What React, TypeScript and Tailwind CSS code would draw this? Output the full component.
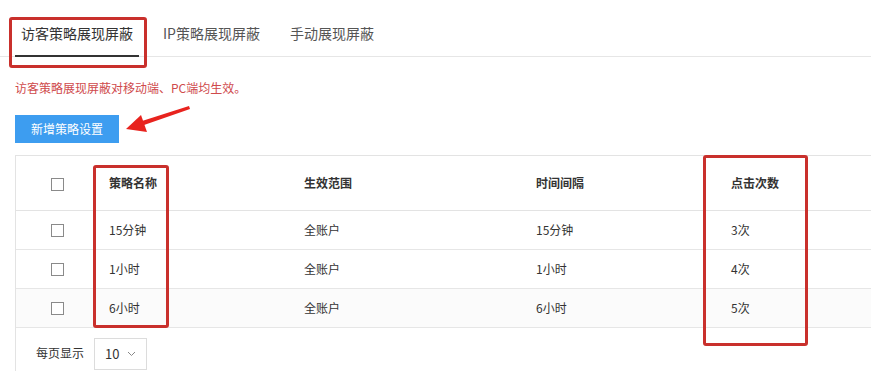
import React from "react";

const rows = [
  { name: "15分钟", scope: "全账户", interval: "15分钟", clicks: "3次" },
  { name: "1小时", scope: "全账户", interval: "1小时", clicks: "4次" },
  { name: "6小时", scope: "全账户", interval: "6小时", clicks: "5次" },
];

function Checkbox() {
  return <span className="ml-[35px] block h-[13px] w-[13px] border border-[#8a8a8a] bg-white" />;
}

export default function App() {
  return (
    <div
      className="relative h-[371px] w-[871px] overflow-hidden bg-white text-[#333]"
      style={{ fontFamily: '"Noto Sans CJK SC", "Noto Sans", sans-serif' }}
    >
      {/* Tabs */}
      <div className="flex h-[57px] gap-[18px] border-b border-[#e6e6e6] pl-[15px]">
        <div className="relative flex h-full items-center px-[6px] pt-[10px] text-[14px] leading-[20px] text-[#333]">
          访客策略展现屏蔽
          <span className="absolute bottom-[-1px] left-0 right-0 h-[2px] bg-[#333]" />
        </div>
        <div className="flex h-full items-center px-[6px] pt-[10px] text-[14px] leading-[20px] text-[#555]">
          IP策略展现屏蔽
        </div>
        <div className="flex h-full items-center px-[6px] pt-[10px] text-[14px] leading-[20px] text-[#555]">
          手动展现屏蔽
        </div>
      </div>

      <div className="pl-[15px]">
        <p className="mt-[22px] text-[12px] leading-[18px] text-[#cf4a4c]">访客策略展现屏蔽对移动端、PC端均生效。</p>
        <button className="mt-[18px] flex h-[28px] w-[104px] items-center justify-center bg-[#3d9df0] text-[12px] text-white">
          新增策略设置
        </button>

        {/* Table */}
        <div className="mt-[12px] border-l border-t border-[#e3e3e3]">
          <div className="grid h-[55px] grid-cols-[93px_195px_232px_195px_1fr] items-center border-b border-[#e3e3e3] text-[12px] font-bold text-[#333]">
            <div className="pt-[2px]"><Checkbox /></div>
            <div>策略名称</div>
            <div>生效范围</div>
            <div>时间间隔</div>
            <div>点击次数</div>
          </div>
          {rows.map((r, i) => (
            <div
              key={i}
              className={`grid h-[39px] grid-cols-[93px_195px_232px_195px_1fr] items-center border-b border-[#e6e6e6] text-[12px] text-[#333] ${i === 2 ? "bg-[#fbfbfb]" : "bg-white"}`}
            >
              <div><Checkbox /></div>
              <div>{r.name}</div>
              <div>{r.scope}</div>
              <div>{r.interval}</div>
              <div>{r.clicks}</div>
            </div>
          ))}
          <div className="flex h-[44px] items-start gap-[10px] pl-[20px] pt-[10px]">
            <span className="mt-[7px] text-[12px] leading-[16px] text-[#333]">每页显示</span>
            <div className="flex h-[32px] w-[53px] items-center gap-[8px] border border-[#dcdcdc] pl-[10px] text-[13px] text-[#333]">
              10
              <svg width="9" height="6" viewBox="0 0 9 6" fill="none" stroke="#888" strokeWidth="1">
                <path d="M1 1l3.5 3.5L8 1" />
              </svg>
            </div>
          </div>
        </div>
      </div>

      {/* Annotations */}
      <div className="absolute left-[9px] top-[17px] h-[51px] w-[138px] rounded-[3px] border-[3px] border-[#c9302c]" />
      <div className="absolute left-[93px] top-[165px] h-[163px] w-[76px] rounded-[3px] border-[3px] border-[#c9302c]" />
      <div className="absolute left-[703px] top-[155px] h-[191px] w-[105px] rounded-[3px] border-[3px] border-[#c9302c]" />
      <svg className="absolute left-[120px] top-[100px]" width="75" height="36" viewBox="120 100 75 36">
        <polygon points="189,106 190,109 144,125 142,121" fill="#e8231e" />
        <polygon points="126,129 141,115 147,132" fill="#e8231e" />
      </svg>
    </div>
  );
}
